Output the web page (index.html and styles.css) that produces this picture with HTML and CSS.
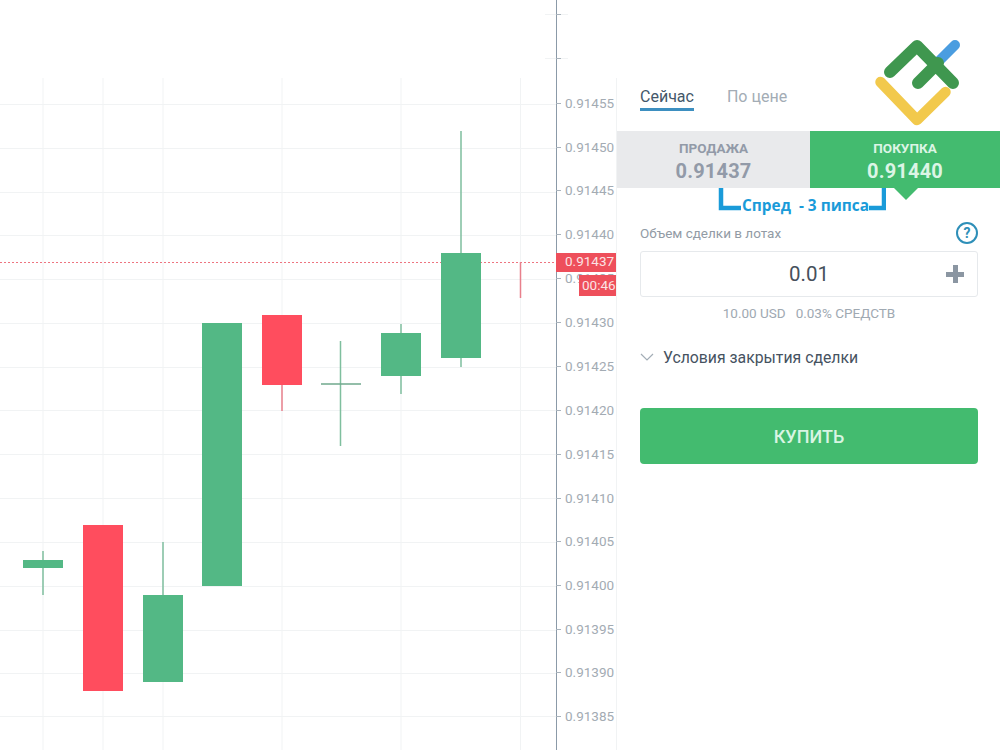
FILE: index.html
```html
<!DOCTYPE html>
<html lang="ru">
<head>
<meta charset="utf-8">
<title>Спред</title>
<link rel="stylesheet" href="styles.css">
</head>
<body>
<div class="page">
  <svg class="chart" width="617" height="750" viewBox="0 0 617 750">
    <g class="grid">
      <path d="M43 78V750M103 78V750M163 78V750M282 78V750M401 78V750M520.500 78V750"/>
      <path d="M0 104.500H556M0 148.500H556M0 192.500H556M0 235.500H556M0 279.500H556M0 323.500H556M0 367.500H556M0 410.500H556M0 454.500H556M0 498.500H556M0 542.500H556M0 586.500H556M0 630.500H556M0 673.500H556M0 716.500H556"/>
      <path d="M545 14.500H568M545 58.500H568"/>
      <path d="M616.500 78V750"/>
    </g>
    <path class="price-line" d="M0 262.500H556"/>
    <g class="wick-g">
      <path d="M43 551V595M163 542V595M340.500 341V446M401 324V394M461 131V367"/>
    </g>
    <path class="cross" d="M321 384H361"/>
    <g class="body-g">
      <rect x="23" y="560" width="40" height="8"/>
      <rect x="143" y="595" width="40" height="87"/>
      <rect x="202" y="323" width="40" height="263"/>
      <rect x="381" y="333" width="40" height="43"/>
      <rect x="441" y="253" width="40" height="105"/>
    </g>
    <g class="wick-r">
      <path d="M282 385V411M520.500 262V298"/>
    </g>
    <g class="body-r">
      <rect x="83" y="525" width="40" height="166"/>
      <rect x="262" y="315" width="40" height="70"/>
    </g>
    <path class="axis" d="M556.500 0V750"/>
    <path class="ticks" d="M556 14.500H561M556 58.500H561M556 103.500H561M556 147.500H561M556 190.500H561M556 234.500H561M556 278.500H561M556 322.500H561M556 366.500H561M556 410.500H561M556 454.500H561M556 498.500H561M556 541.500H561M556 585.500H561M556 629.500H561M556 672.500H561M556 716.500H561"/>
    <g class="axis-labels">
      <text x="565" y="108">0.91455</text>
      <text x="565" y="152">0.91450</text>
      <text x="565" y="195">0.91445</text>
      <text x="565" y="239">0.91440</text>
      <text x="565" y="283">0.91435</text>
      <text x="565" y="327">0.91430</text>
      <text x="565" y="371">0.91425</text>
      <text x="565" y="415">0.91420</text>
      <text x="565" y="459">0.91415</text>
      <text x="565" y="503">0.91410</text>
      <text x="565" y="546">0.91405</text>
      <text x="565" y="590">0.91400</text>
      <text x="565" y="634">0.91395</text>
      <text x="565" y="677">0.91390</text>
      <text x="565" y="721">0.91385</text>
    </g>
    <rect class="tag" x="556" y="253" width="60" height="19"/>
    <text class="tag-text" x="565" y="266">0.91437</text>
    <rect class="tag" x="579" y="275" width="37" height="21"/>
    <text class="tag-text" x="582" y="290">00:46</text>
  </svg>

  <aside class="panel">
    <nav class="tabs">
      <span class="tab tab-active">Сейчас</span>
      <span class="tab">По цене</span>
    </nav>
    <div class="quotes">
      <div class="quote quote-sell">
        <span class="quote-label">ПРОДАЖА</span>
        <span class="quote-price">0.91437</span>
      </div>
      <div class="quote quote-buy">
        <span class="quote-label">ПОКУПКА</span>
        <span class="quote-price">0.91440</span>
      </div>
    </div>
    <div class="form">
      <div class="volume-head">
        <span class="volume-label">Объем сделки в лотах</span>
        <span class="help">?</span>
      </div>
      <div class="volume-input">
        <span class="volume-value">0.01</span>
        <span class="plus"></span>
      </div>
      <div class="volume-info"><span>10.00 USD</span><span>0.03% СРЕДСТВ</span></div>
      <div class="conditions">
        <svg class="chevron" width="14" height="8" viewBox="0 0 14 8"><path d="M1 1L7 7L13 1"/></svg>
        <span>Условия закрытия сделки</span>
      </div>
      <button class="buy-button" type="button">КУПИТЬ</button>
    </div>
  </aside>

  <svg class="logo" width="100" height="100" viewBox="870 35 100 100">
    <path class="logo-blue" d="M938 62L955 45"/>
    <path class="logo-yellow" d="M880.500 82L917 120L945.500 92"/>
    <path class="logo-green" d="M890 72L917 46L953 83M918 83L938 63"/>
  </svg>

  <div class="spread">
    <svg class="bracket" width="24" height="24" viewBox="0 0 24 24"><path d="M3 0V20H23"/></svg>
    <span class="spread-text">Спред&nbsp; - 3 пипса</span>
    <svg class="bracket" width="17" height="24" viewBox="0 0 17 24"><path d="M0 20H15V0"/></svg>
  </div>
</div>
</body>
</html>
```
FILE: styles.css
```css
* { box-sizing: border-box; }
html, body { margin: 0; padding: 0; background: #fff; }
body { font-family: Roboto, "Liberation Sans", sans-serif; overflow: hidden; }

.page { position: relative; display: flex; width: 1000px; height: 750px; overflow: hidden; }

/* Chart */
.chart { display: block; flex: none; }
.grid path { stroke: #f1f3f4; stroke-width: 1; fill: none; }
.price-line { stroke: #ee7480; stroke-width: 1; stroke-dasharray: 2 2; fill: none; }
.wick-g path { stroke: #7fbf9e; stroke-width: 1.500; fill: none; }
.cross { stroke: #6fa98c; stroke-width: 1.500; fill: none; }
.body-g rect { fill: #53b885; }
.wick-r path { stroke: #e8808c; stroke-width: 1.500; fill: none; }
.body-r rect { fill: #ff4d5e; }
.axis { stroke: #8b9aa8; stroke-width: 1; fill: none; }
.ticks { stroke: #a9b3bc; stroke-width: 1; fill: none; }
.axis-labels text { font-size: 13.500px; fill: #a3abb3; }
.tag { fill: #ee4f5b; }
.tag-text { font-size: 13.500px; fill: #fbe3e5; }

/* Panel */
.panel { flex: none; width: 383px; display: flex; flex-direction: column; padding-top: 87px; }
.tabs { display: flex; gap: 33px; padding-left: 23px; height: 44px; }
.tab { font-size: 16px; line-height: 20px; height: 24px; color: #a3acb5; }
.tab-active { color: #44576a; border-bottom: 3px solid #3d8fc0; }

.quotes { display: flex; height: 57px; }
.quote-sell { width: 193px; background: #e9eaec; color: #929aa8; }
.quote-buy { width: 190px; position: relative; background: #43bb6f; color: #dcf5e5; }
.quote { display: flex; flex-direction: column; align-items: center; padding-top: 9px; }
.quote-buy::after {
  content: "";
  position: absolute;
  left: 84px;
  top: 57px;
  border-left: 12px solid transparent;
  border-right: 12px solid transparent;
  border-top: 12px solid #43bb6f;
}
.quote-label { font-size: 13.500px; line-height: 16px; font-weight: 700; }
.quote-price { font-size: 20px; line-height: 24px; margin-top: 3px; font-weight: 700; letter-spacing: 0.200px; }

.form { display: flex; flex-direction: column; padding: 30px 22px 0 23px; }
.volume-head { display: flex; justify-content: space-between; align-items: center; height: 30px; }
.volume-label { font-size: 13.500px; color: #929ba5; }
.help {
  width: 22px; height: 22px; border: 2px solid #2e8fb8; border-radius: 50%;
  color: #2e8fb8; font-size: 14px; font-weight: 700; line-height: 18px; text-align: center;
}
.volume-input {
  position: relative; height: 46px; margin-top: 3px;
  border: 1px solid #e6e9ec; border-radius: 3px;
  display: flex; align-items: center; justify-content: center;
}
.volume-value { font-size: 20.500px; color: #46505c; }
.plus {
  position: absolute; right: 13px; top: 13px; width: 18px; height: 18px;
  background:
    linear-gradient(#8b96a2, #8b96a2) center / 18px 5px no-repeat,
    linear-gradient(#8b96a2, #8b96a2) center / 5px 18px no-repeat;
}
.volume-info { display: flex; justify-content: center; gap: 10px; margin-top: 8px; font-size: 13.500px; line-height: 16px; color: #a0a9b2; }
.conditions { display: flex; align-items: center; gap: 9px; margin-top: 25px; height: 22px; font-size: 15.800px; color: #46525f; }
.chevron { flex: none; }
.chevron path { stroke: #a3adb6; stroke-width: 1.200; fill: none; }
.buy-button {
  height: 56px; margin-top: 40px; border: 0; border-radius: 4px; background: #43bb6f; color: #d9f5e3;
  font-family: inherit; font-size: 18px; font-weight: 500; padding: 0;
}

/* Overlays */
.logo { position: absolute; left: 870px; top: 35px; }
.logo path { fill: none; stroke-linecap: round; stroke-linejoin: round; }
.logo-blue { stroke: #4a9de0; stroke-width: 10; }
.logo-yellow { stroke: #f2c94c; stroke-width: 10.500; }
.logo-green { stroke: #3f974f; stroke-width: 12; }

.spread { position: absolute; left: 718px; top: 188px; display: flex; align-items: flex-start; }
.bracket { display: block; flex: none; }
.bracket path { fill: none; stroke: #1a9bd9; stroke-width: 4.500; }
.spread-text {
  font-family: "Open Sans", "Noto Sans", sans-serif; font-size: 15.400px; font-weight: 700;
  line-height: 20px; margin-top: 8px; color: #1a9bd9; white-space: nowrap;
}
```
